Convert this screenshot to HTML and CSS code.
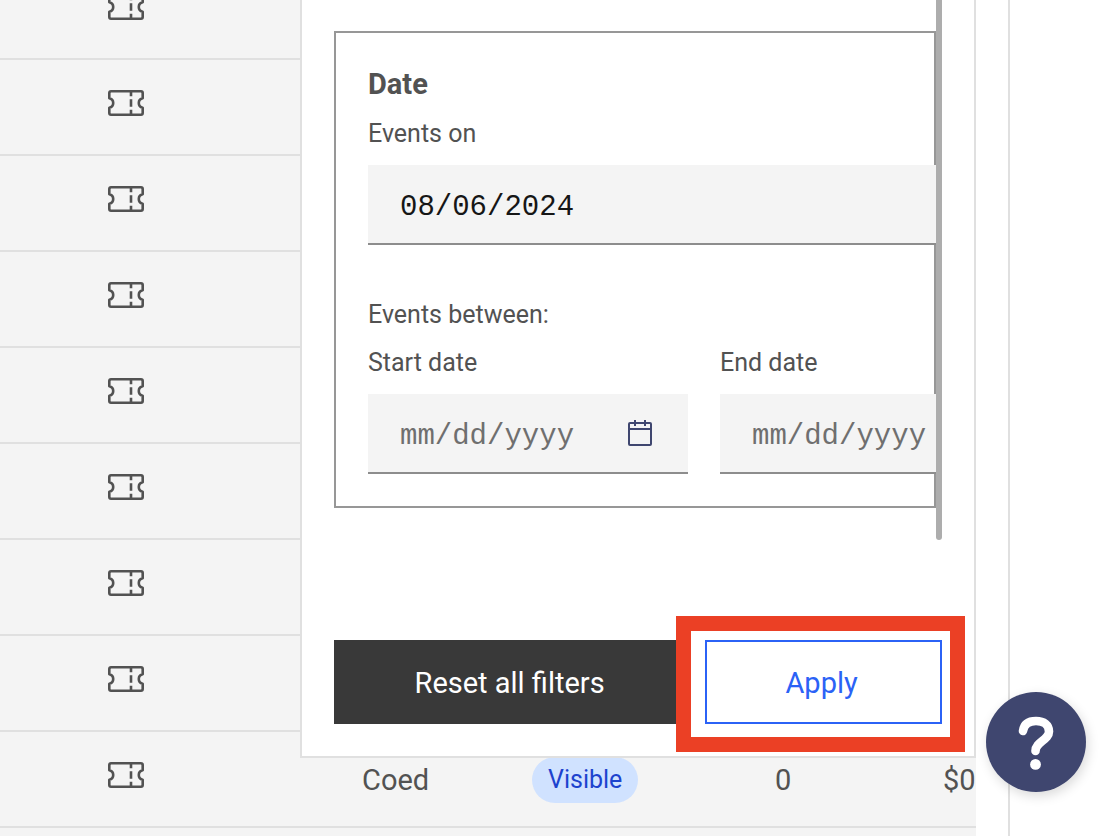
FILE: index.html
```
<!DOCTYPE html>
<html lang="en">
<head>
<meta charset="utf-8">
<meta name="viewport" content="width=device-width, initial-scale=1">
<title>Events</title>
<link rel="stylesheet" href="styles.css">
</head>
<body>
<svg class="sprite" aria-hidden="true">
  <symbol id="ticket" viewBox="0 0 36 26">
    <path d="M3 1.3H33Q34.7 1.3 34.7 3V8.2A4.9 4.9 0 0 0 34.7 17.8V23Q34.7 24.7 33 24.7H3Q1.3 24.7 1.3 23V17.8A4.9 4.9 0 0 0 1.3 8.2V3Q1.3 1.3 3 1.3Z" fill="none" stroke="currentColor" stroke-width="2.6" stroke-linejoin="round"/>
    <path d="M23 2V6.3M23 9.2V16.8M23 19.7V24" fill="none" stroke="currentColor" stroke-width="2.6"/>
  </symbol>
  <symbol id="calendar" viewBox="0 0 24 26">
    <path d="M2 3H22Q23 3 23 4V24Q23 25 22 25H2Q1 25 1 24V4Q1 3 2 3ZM1 9H23M7 0V6M17 0V6" fill="none" stroke="currentColor" stroke-width="2"/>
  </symbol>
</svg>
<div class="page">
  <main class="content">
    <table class="events">
      <colgroup><col class="col-icon"><col class="col-type"><col class="col-status"><col class="col-count"><col class="col-price"></colgroup>
      <tbody>
        <tr><td class="icon-cell"><svg class="ticket"><use href="#ticket"/></svg></td><td></td><td></td><td></td><td></td></tr>
        <tr><td class="icon-cell"><svg class="ticket"><use href="#ticket"/></svg></td><td></td><td></td><td></td><td></td></tr>
        <tr><td class="icon-cell"><svg class="ticket"><use href="#ticket"/></svg></td><td></td><td></td><td></td><td></td></tr>
        <tr><td class="icon-cell"><svg class="ticket"><use href="#ticket"/></svg></td><td></td><td></td><td></td><td></td></tr>
        <tr><td class="icon-cell"><svg class="ticket"><use href="#ticket"/></svg></td><td></td><td></td><td></td><td></td></tr>
        <tr><td class="icon-cell"><svg class="ticket"><use href="#ticket"/></svg></td><td></td><td></td><td></td><td></td></tr>
        <tr><td class="icon-cell"><svg class="ticket"><use href="#ticket"/></svg></td><td></td><td></td><td></td><td></td></tr>
        <tr><td class="icon-cell"><svg class="ticket"><use href="#ticket"/></svg></td><td></td><td></td><td></td><td></td></tr>
        <tr><td class="icon-cell"><svg class="ticket"><use href="#ticket"/></svg></td><td>Coed</td><td><span class="tag">Visible</span></td><td>0</td><td>$0</td></tr>
        <tr><td></td><td></td><td></td><td></td><td></td></tr>
      </tbody>
    </table>

    <form class="panel">
      <div class="panel-scroll">
        <div class="panel-body">
          <section class="group">
            <h3 class="group-title">Date</h3>
            <div class="field field-wide">
              <label for="on">Events on</label>
              <div class="box"><input id="on" type="text" value="08/06/2024"></div>
            </div>
            <p class="between">Events between:</p>
            <div class="range">
              <div class="field">
                <label for="start">Start date</label>
                <div class="box"><input id="start" type="text" placeholder="mm/dd/yyyy"><svg class="calendar"><use href="#calendar"/></svg></div>
              </div>
              <div class="field">
                <label for="end">End date</label>
                <div class="box"><input id="end" type="text" placeholder="mm/dd/yyyy"><svg class="calendar"><use href="#calendar"/></svg></div>
              </div>
            </div>
          </section>
        </div>
        <div class="scrollbar"></div>
      </div>
      <div class="actions">
        <button class="btn reset" type="reset">Reset all filters</button>
        <div class="apply-wrap">
          <button class="btn apply" type="button">Apply</button>
          <div class="highlight"></div>
        </div>
      </div>
    </form>
  </main>
  <aside class="side"></aside>
</div>
<button class="help" type="button" aria-label="Help">
  <svg viewBox="0 0 36 56" aria-hidden="true">
    <path d="M5 17C6 10 11 7 18 7C26 7 31 11 31 17.500C31 26 17.500 28 17.500 37" fill="none" stroke="#fff" stroke-width="8.600" stroke-linecap="round"/>
    <circle cx="17.500" cy="50.400" r="5.400" fill="#fff"/>
  </svg>
</button>
</body>
</html>
```
FILE: styles.css
```
* { box-sizing: border-box; }

body {
  margin: 0;
  background: #fff;
  color: #525252;
  font: 29px/36px Roboto, "Liberation Sans", sans-serif;
}

.sprite { position: absolute; width: 0; height: 0; }

.page {
  display: flex;
  gap: 32px;
  height: 100vh;
  overflow: hidden;
}

.content {
  position: relative;
  flex: 1;
  min-width: 0;
}

.side {
  width: 98px;
  border-left: 2px solid #e0e0e0;
}

.events {
  width: 100%;
  margin-top: -36px;
  table-layout: fixed;
  border-collapse: separate;
  border-spacing: 0;
  background: #f4f4f4;
}

.events td {
  height: 96px;
  padding: 2px 0 0;
  border-bottom: 2px solid #e0e0e0;
  vertical-align: middle;
}

.events .icon-cell { padding: 0 0 8px 108px; }
.col-icon { width: 362px; }
.col-type { width: 170px; }
.col-status { width: 243px; }
.col-count { width: 168px; }

.ticket { display: block; width: 36px; height: 26px; }

.tag {
  display: block;
  width: max-content;
  padding: 0 16px;
  border-radius: 24px;
  background: #d0e2ff;
  color: #1d43ce;
  font-size: 25px;
  line-height: 46px;
}

.panel {
  position: absolute;
  top: 0;
  right: 0;
  left: 300px;
  padding: 0 32px 32px;
  border: 2px solid #e0e0e0;
  border-top: 0;
  background: #fff;
}

.panel-scroll { display: flex; }

.panel-body {
  flex: 1;
  min-width: 0;
  padding: 31px 0 32px;
  overflow: hidden;
}

.scrollbar {
  width: 6px;
  border-radius: 0 0 3px 3px;
  background: #adadad;
}

.group {
  padding: 33px 32px 32px;
  border: 2px solid #979797;
}

.group-title {
  margin: 0 0 16px;
  font-size: 29px;
  font-weight: 700;
}

.field label,
.between {
  display: block;
  margin: 0 0 15px;
  font-size: 25px;
  line-height: 32px;
}

.between { margin-bottom: 16px; }

.field-wide { width: 672px; margin-bottom: 54px; }

.range {
  display: grid;
  grid-template-columns: 320px 320px;
  gap: 32px;
}

.box {
  display: flex;
  align-items: center;
  height: 80px;
  padding: 0 36px 0 32px;
  border-bottom: 2px solid #8d8d8d;
  background: #f4f4f4;
}

.box input {
  flex: 1;
  min-width: 0;
  height: 76px;
  padding: 6px 0 0;
  border: 0;
  outline: 0;
  background: transparent;
  color: #161616;
  font: 29px "Liberation Mono", monospace;
}

.box input::placeholder { color: #6f6f6f; opacity: 1; }

.calendar { width: 24px; height: 26px; color: #3f466f; }

.actions {
  display: grid;
  grid-template-columns: 3fr 2fr;
  gap: 16px;
  margin-top: 100px;
}

.btn {
  height: 84px;
  padding: 2px 4px 0 0;
  border-radius: 0;
  font: inherit;
}

.reset {
  border: 0;
  background: #393939;
  color: #fff;
}

.apply-wrap { position: relative; }

.apply {
  display: block;
  width: 100%;
  border: 2px solid #2b62f6;
  background: #fff;
  color: #2b62f6;
}

.highlight {
  position: absolute;
  inset: -24px -23px -28px -29px;
  border: 15px solid #eb4025;
  pointer-events: none;
}

.help {
  position: fixed;
  right: 20px;
  bottom: 44px;
  display: grid;
  place-items: center;
  width: 100px;
  height: 100px;
  padding: 0;
  border: 0;
  border-radius: 50%;
  background: #3f466f;
  box-shadow: 2px 4px 12px rgba(0, 0, 0, 0.15);
}

.help svg { width: 36px; height: 56px; }
```
